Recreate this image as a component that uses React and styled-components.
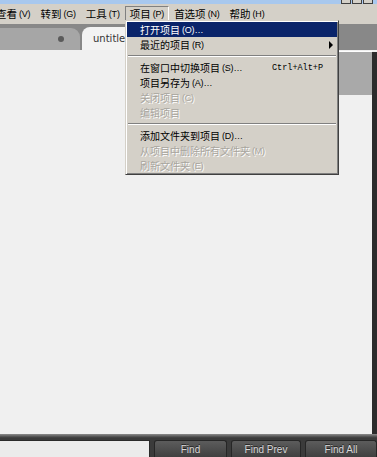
import React from "react"
import styled, { createGlobalStyle } from "styled-components"

const Global = createGlobalStyle`
html, body {
  margin: 0;
  padding: 0;
  background: #f0f0f0;
  overflow: hidden;
}
`

const Window = styled.div`
position: relative;
width: 377px;
height: 457px;
display: flex;
flex-direction: column;
overflow: hidden;
font-family: "Noto Sans CJK SC", sans-serif;
`

const TitleStrip = styled.div`
height: 4px;
flex: 0 0 auto;
background: #a8c8ee;
display: flex;
justify-content: flex-end;
align-items: flex-end;
gap: 1px;
padding-right: 4px;
`

const WinButton = styled.div`
width: 8px;
height: 3px;
background: #d4d0c8;
border: 1px solid #404040;
border-top: none;
`

const MenuBar = styled.div`
height: 20px;
flex: 0 0 auto;
background: #d4d0c8;
display: flex;
align-items: center;
margin-left: -9px;
font-size: 10.5px;
line-height: 14px;
color: #000;
`

const MenuTitle = styled.div`
height: 17px;
box-sizing: border-box;
display: flex;
align-items: center;
padding: 0 4px;
border: 1px solid transparent;
border-color: ${p => p.$open ? "#808080 #ffffff #ffffff #808080" : "transparent"};
white-space: nowrap;
`

const Key = styled.span`
font-family: "Liberation Sans", sans-serif;
font-size: 9px;
margin-left: 2px;
letter-spacing: -0.2px;
`

const TabBar = styled.div`
height: 26px;
flex: 0 0 auto;
background: #888888;
display: flex;
align-items: flex-end;
`

const InactiveTab = styled.div`
width: 80px;
height: 22px;
box-sizing: border-box;
background: #a6a6a6;
border-radius: 0 9px 0 0;
display: flex;
align-items: center;
justify-content: flex-end;
padding-right: 16px;
`

const Dot = styled.div`
width: 6px;
height: 6px;
border-radius: 50%;
background: #5a5a5a;
`

const ActiveTab = styled.div`
margin-left: 2px;
width: 130px;
height: 23px;
box-sizing: border-box;
background: #f3f3f3;
border-radius: 8px 8px 0 0;
display: flex;
align-items: center;
padding-left: 11px;
font-family: "DejaVu Sans", sans-serif;
font-size: 10px;
color: #333;
`

const Editor = styled.div`
flex: 1;
display: flex;
background: #f0f0f0;
`

const Text = styled.div`
flex: 1;
`

const Minimap = styled.div`
width: 40px;
`

const Viewport = styled.div`
margin-top: 1px;
height: 43px;
background: #a9a9a9;
border-top: 1px solid #ffffff;
`

const Scrollbar = styled.div`
width: 5px;
margin-top: 2px;
background: #2c2c2c;
`

const FindPanel = styled.div`
height: 23px;
flex: 0 0 auto;
box-sizing: border-box;
display: flex;
align-items: flex-end;
gap: 4px;
background: linear-gradient(#8d8d8d 0, #4a4a4a 3px, #3b3b3b 4px, #3b3b3b 100%);
`

const FindInput = styled.div`
width: 156px;
height: 17px;
box-sizing: border-box;
background: #ebebeb;
border: 1px solid #2a2a2a;
border-bottom: none;
border-left: none;
`

const FindButton = styled.div`
width: ${p => p.$w}px;
flex: 0 0 auto;
height: 17px;
box-sizing: border-box;
display: flex;
align-items: center;
justify-content: center;
border: 1px solid #262626;
border-bottom: none;
border-radius: 3px 3px 0 0;
background: linear-gradient(#5c5c5c, #404040);
color: #dadada;
font-family: "Liberation Sans", sans-serif;
font-size: 10px;
text-shadow: 0 -1px 0 #222;
`

const Dropdown = styled.div`
position: absolute;
left: 125px;
top: 20px;
width: 214px;
box-sizing: border-box;
padding: 1px;
background: #d4d0c8;
border: 1px solid;
border-color: #d4d0c8 #404040 #404040 #d4d0c8;
box-shadow: inset 1px 1px 0 #ffffff, inset -1px -1px 0 #808080;
font-size: 10px;
line-height: 14px;
`

const Item = styled.div`
height: 15px;
display: flex;
align-items: center;
padding: 0 14px 0 13px;
white-space: nowrap;
background: ${p => p.$active ? "#0a246a" : "transparent"};
color: ${p => p.$active ? "#ffffff" : p.$disabled ? "#a8a59e" : "#000000"};
text-shadow: ${p => p.$disabled ? "1px 1px 0 #ffffff" : "none"};
`

const Shortcut = styled.span`
margin-left: auto;
font-family: "Liberation Mono", monospace;
font-size: 8.5px;
`

const Arrow = styled.span`
margin-left: auto;
margin-right: -10px;
width: 0;
height: 0;
border-left: 4px solid #000;
border-top: 4px solid transparent;
border-bottom: 4px solid transparent;
`

const Separator = styled.div`
height: ${p => p.$h}px;
display: flex;
align-items: center;
&::before {
  content: "";
  flex: 1;
  margin: 0 1px;
  border-top: 1px solid #808080;
  border-bottom: 1px solid #ffffff;
}
`

const menus = [
  ["查看", "(V)"],
  ["转到", "(G)"],
  ["工具", "(T)"],
  ["项目", "(P)"],
  ["首选项", "(N)"],
  ["帮助", "(H)"],
]

export default function App() {
  return (
    <Window>
      <Global />
      <TitleStrip>
        <WinButton />
        <WinButton />
        <WinButton />
      </TitleStrip>
      <MenuBar>
        {menus.map(([label, key]) => (
          <MenuTitle key={label} $open={label === "项目"}>
            {label}<Key>{key}</Key>
          </MenuTitle>
        ))}
      </MenuBar>
      <TabBar>
        <InactiveTab><Dot /></InactiveTab>
        <ActiveTab>untitled</ActiveTab>
      </TabBar>
      <Editor>
        <Text />
        <Minimap><Viewport /></Minimap>
        <Scrollbar />
      </Editor>
      <FindPanel>
        <FindInput />
        <FindButton $w={73}>Find</FindButton>
        <FindButton $w={70}>Find Prev</FindButton>
        <FindButton $w={72}>Find All</FindButton>
      </FindPanel>

      <Dropdown>
        <Item $active>打开项目<Key>(O)…</Key></Item>
        <Item>最近的项目<Key>(R)</Key><Arrow /></Item>
        <Separator $h={8} />
        <Item>在窗口中切换项目<Key>(S)…</Key><Shortcut>Ctrl+Alt+P</Shortcut></Item>
        <Item>项目另存为<Key>(A)…</Key></Item>
        <Item $disabled>关闭项目<Key>(C)</Key></Item>
        <Item $disabled>编辑项目</Item>
        <Separator $h={8} />
        <Item>添加文件夹到项目<Key>(D)…</Key></Item>
        <Item $disabled>从项目中删除所有文件夹<Key>(M)</Key></Item>
        <Item $disabled>刷新文件夹<Key>(E)</Key></Item>
      </Dropdown>
    </Window>
  )
}
